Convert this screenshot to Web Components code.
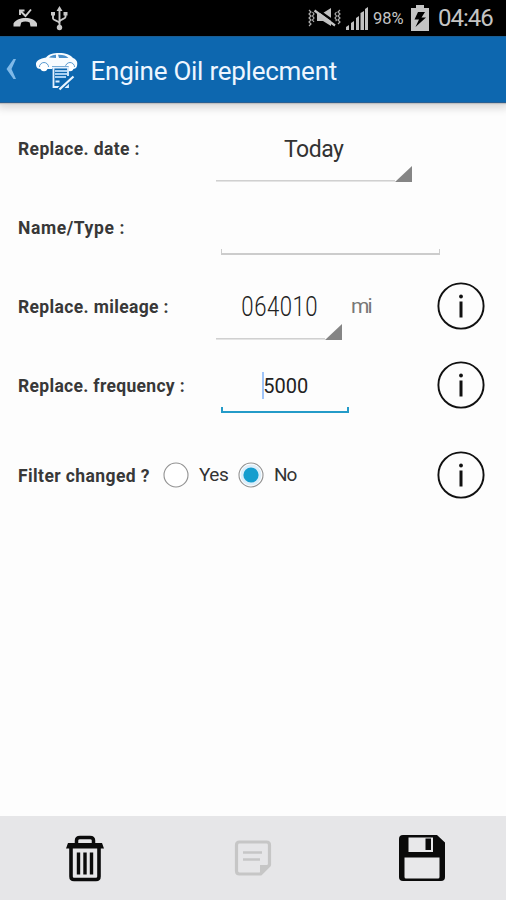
<!DOCTYPE html>
<html lang="en">
<head>
<meta charset="utf-8">
<title>Engine Oil</title>
<style>
html,body{margin:0;height:100%;background:#fdfdfd}
body{font-family:Roboto,"Liberation Sans",sans-serif}
</style>
</head>
<body>
<oil-app></oil-app>
<script>
const define = (name, html, ready) => {
  const t = document.createElement('template');
  t.innerHTML = html;
  customElements.define(name, class extends HTMLElement {
    constructor() { super(); this.attachShadow({mode: 'open'}).append(t.content.cloneNode(true)); }
    connectedCallback() { if (ready) ready(this, this.shadowRoot); }
  });
};

/* Text run whose tracking is adjusted to the width given in "w". */
define('track-text', `<style>:host{display:inline-block;white-space:pre;line-height:1}span{display:inline-block}</style><span><slot></slot></span>`,
  (el, root) => {
    const span = root.querySelector('span'), w = +el.getAttribute('w');
    el.style.width = w + 'px';
    const n = el.textContent.length;
    span.style.letterSpacing = ((w - span.offsetWidth) / (n - 1)) + 'px';
  });

define('status-bar', `<style>
:host{display:flex;height:36px;background:#000;color:#c4c4c4;align-items:center;box-sizing:border-box;position:relative;z-index:1}
svg{display:block;flex:none}.gap{flex:1}
.pct{font-size:16.500px;margin-left:4px;padding-top:2px}.time{font-size:24px;margin:0 12px 0 9px}
</style>
<svg style="margin-left:13px" width="25" height="36" fill="none" stroke="#cfcfcf"><path d="M0.5 26.5v-3c2.5-4 7-5.5 12-5.5s9.500 1.500 11.500 5.500v3h-6.500l-.8-4c-2.500-1.200-6-1.200-8.500 0l-1 4z" fill="#cfcfcf" stroke="none"/><path d="M7 15V10.500h4.500M7.500 11l5 5L18 9.500" stroke-width="1.900"/></svg>
<svg style="margin-left:12px" width="19" height="36" fill="none" stroke="#c8c8c8" stroke-width="1.900"><path d="M9.500 9v18M3 14v4.500c0 2 6.500 2.500 6.500 5M15.500 14v3c0 2-6 2.500-6 5"/><circle cx="9.500" cy="27.500" r="2.700" fill="#c8c8c8" stroke="none"/><path d="M6.500 11l3-5 3 5zM1 12h4v3.500H1zM13.500 12h4v3.500h-4z" fill="#c8c8c8" stroke="none"/></svg>
<span class="gap"></span>
<svg width="33" height="36" fill="none" stroke="#aaa" stroke-width="1.200"><path d="M1 10l2 2-2 2 2 2-2 2 2 2-2 2 2 2-2 2M4.500 12l1.500 2-1.500 2 1.500 2-1.500 2 1.500 2M28.500 12l-1.500 2 1.500 2-1.500 2 1.500 2-1.500 2M32 10l-2 2 2 2-2 2 2 2-2 2 2 2-2 2"/><path d="M9 13h6l8-5v18l-8-5H9z" fill="#c0c0c0" stroke="none"/><path d="M7 8L28 23" stroke="#000" stroke-width="2.500"/><path d="M6.500 10.500L27 25.500" stroke="#c4c4c4" stroke-width="2.200"/></svg>
<svg style="margin-left:4px" width="24" height="36" fill="#c0c0c0"><path d="M1 30v-3l3-2v5zM6 30v-7l3-2v9zM11 30V18l3-2v14zM15.500 30V13l3.500-2v19zM20 30V9l3-2v23z"/></svg>
<track-text class="pct" w="31">98%</track-text>
<svg style="margin-left:7px" width="18" height="36"><path d="M5 5h8v3h5v23H0V8h5z" fill="#c4c4c4"/><path d="M7 12h7l-3.500 5.500H15L4.500 27 8 19.500H3.500z" fill="#000"/></svg>
<track-text class="time" w="56">04:46</track-text>`);

define('title-bar', `<style>
:host{display:flex;height:67px;background:#0d67af;color:#eef6ff;align-items:center;box-sizing:border-box;border-top:1px solid #1a5d92;border-bottom:1px solid #2a5f92;box-shadow:0 1px 1px #c0c0c0,0 3px 8px 2px #d8d8d8;position:relative}
svg{display:block;flex:none}track-text{font-size:26px;margin-left:12.500px;padding-top:2px}
</style>
<svg width="30" height="65"><path d="M13.500 22h2.500l-4.500 10 4.500 10h-2.500L6.500 32z" fill="#7fb9e8"/></svg>
<svg style="margin-left:5px" width="43" height="65"><path d="M1 28c-.5-4.500 4-6.500 10-7.500 3-3.500 7-4.500 13-4.500 7 0 11 1.500 14 5 3.500 1.500 5 4 4 8-.3 2-2 3-4 3H6c-3 0-4.500-1-5-4z" fill="#f8fcff"/><path d="M14 20.500c2-2 4-2.800 7-2.800v3.300zM23 17.700c5-.2 8 .8 10.500 3.300H24z" fill="#4a90cc"/><path d="M4.500 30a4.500 4.500 0 0 1 9 0M30.500 30a4.500 4.500 0 0 1 9 0" fill="none" stroke="#5b9bd0" stroke-width="1"/><circle cx="9" cy="30.500" r="3.700" fill="#fff"/><circle cx="35" cy="30.500" r="3.700" fill="#fff"/>
<path d="M17 29h16.500v14l-6 7H17z" fill="#0d67af"/><path d="M17 30.500h16.500M18.500 30v20h8M33 30v9M33 45v5h-3.500" fill="none" stroke="#e4f1ff" stroke-width="1.800"/><path d="M20 34h12M20 37h12M20 40h11" stroke="#a9d0f2" stroke-width="1.800"/><path d="M20.500 44.500h4" stroke="#e4f1ff" stroke-width="2"/><path d="M39 39L27 50l-2.500 2.500" stroke="#0d67af" stroke-width="5"/><path d="M38.500 39.500L26.500 50.500l-2 2" stroke="#eaf5ff" stroke-width="2.200"/></svg>
<track-text w="247">Engine Oil replecment</track-text>`);

define('info-button', `<style>:host{display:block;width:48px;height:48px;margin-bottom:2px}svg{display:block}</style>
<svg width="48" height="48"><circle cx="24" cy="24" r="22.600" fill="none" stroke="#111" stroke-width="1.900"/><circle cx="24" cy="14.500" r="1.900" fill="#111"/><path d="M24 19.500V35.500" stroke="#111" stroke-width="3"/></svg>`);

define('spinner-field', `<style>
:host{display:grid;height:100%;grid-template:1fr 16px 6px/1fr;box-sizing:border-box;color:#333}
.v{grid-area:1/1/4/2;place-self:center;padding-top:1px}
.l{grid-area:2/1;display:flex;align-items:flex-end}
.l i{flex:1;height:1px;background:#d0d0d0;border-bottom:1px solid #e4e4e4}
svg{display:block}
</style><div class="v"><slot></slot></div><div class="l"><i></i><svg width="17" height="16"><path d="M17 0v16H0z" fill="#858585"/></svg></div>`);

define('edit-field', `<style>
:host{display:grid;height:100%;grid-template:1fr 6px 12px/1fr;color:#222}
.v{grid-area:1/1/4/2;place-self:center}
.l{grid-area:2/1;border:solid var(--line,#ccc);border-width:0 var(--side,1px) var(--base,2px)}
</style><div class="v"><slot></slot></div><div class="l"></div>`);

define('form-row', `<style>
:host{display:grid;grid-template-columns:198px 1fr 48px;height:79px;padding:0 21px 0 18px;align-items:center}
.label{font-weight:700;font-size:17.500px;color:#383838;display:flex;padding-top:2px}
.field{height:100%;display:flex;align-items:center}
</style><div class="label"><slot name="label"></slot></div><div class="field"><slot></slot></div><slot name="info"></slot>`);

define('radio-option', `<style>:host{display:flex;align-items:center;font-size:19px;color:#333;margin-top:-2px}svg{display:block;margin-right:9px}.dot{display:none}:host([checked]) .dot{display:block}</style>
<svg width="28" height="28"><circle cx="14" cy="14" r="12" fill="#fff" stroke="#929292" stroke-width="1.100"/><g class="dot"><circle cx="14" cy="14" r="10.500" fill="#dceefa"/><circle cx="14" cy="14" r="7.600" fill="#159dce"/></g></svg><slot></slot>`);

define('action-bar', `<style>
:host{display:grid;grid-template-columns:repeat(3,1fr);height:84px;background:#e6e6e8;place-items:center}
svg{display:block}
</style>
<svg style="margin-left:2px" width="48" height="48" fill="none" stroke="#0b0b0b"><path d="M15.500 9V6.500c0-2 1.500-3 3.500-3h10c2 0 3.500 1 3.500 3V9" stroke-width="3.500"/><path d="M7 9h34l2 5.500H5z" fill="#0b0b0b" stroke="none"/><path d="M10 14v28.500q0 3 3 3h22q3 0 3-3V14" stroke-width="3.600"/><path d="M17.500 18.500v22M24 18.500v22M30.500 18.500v22" stroke-width="3.400"/></svg>
<svg width="40" height="40" fill="none" stroke="#c6c6c6"><path d="M6.500 4h27q3 0 3 3v20l-9 9h-21q-3 0-3-3V7q0-3 3-3z" stroke-width="3.200" stroke-linejoin="round"/><path d="M27 37V27h10z" fill="#c6c6c6" stroke="none"/><path d="M10 14.500h19M10 21.500h17" stroke-width="2.400"/></svg>
<svg width="46" height="46"><path d="M4 0h34l8 7.500V42q0 4-4 4H4q-4 0-4-4V4q0-4 4-4z" fill="#0a0a0a"/><path d="M9.500 2.500H34V17H9.500z" fill="#e8e8ea"/><path d="M26.500 3.500H32V15h-5.500z" fill="#0a0a0a"/><path d="M5.500 22.500h35V42q0 1.500-1.500 1.500H7Q5.500 43.500 5.500 42z" fill="#e8e8ea"/></svg>`);

define('oil-app', `<style>
:host{display:flex;flex-direction:column;height:900px;width:506px;background:#fdfdfd;overflow:hidden}
main{flex:1;padding-top:6px;display:flex;flex-direction:column}
form-row{flex:none}
.sp1{width:196px}.sp2{width:126px}
.ed{margin-left:5px}
.digits{font-size:27px;font-weight:300;transform:scaleX(.82);margin:0 -8px;color:#222}
.num{display:flex;align-items:center;font-size:20px}
.num i{width:2.500px;height:27px;background:#9fc4f8;margin-right:-1px}
.choice{grid-template-columns:144px 1fr 48px;margin-top:11px}
</style>
<status-bar></status-bar>
<title-bar></title-bar>
<main>
<form-row><track-text slot="label" w="121">Replace. date :</track-text><spinner-field class="sp1"><track-text w="60" style="font-size:23px">Today</track-text></spinner-field></form-row>
<form-row><track-text slot="label" w="106">Name/Type :</track-text><edit-field class="ed" style="width:219px"></edit-field></form-row>
<form-row><track-text slot="label" w="150">Replace. mileage :</track-text><spinner-field class="sp2"><track-text class="digits" w="93">064010</track-text></spinner-field><track-text w="22" style="font-size:21px;color:#777;margin-left:9px">mi</track-text><info-button slot="info"></info-button></form-row>
<form-row><track-text slot="label" w="167">Replace. frequency :</track-text><edit-field class="ed" style="width:128px;--line:#249bc8;--side:2px"><div class="num"><i></i><track-text w="45">5000</track-text></div></edit-field><info-button slot="info"></info-button></form-row>
<form-row class="choice"><track-text slot="label" w="131">Filter changed ?</track-text><radio-option><track-text w="30">Yes</track-text></radio-option><radio-option checked style="margin-left:8px"><track-text w="23">No</track-text></radio-option><info-button slot="info"></info-button></form-row>
</main>
<action-bar></action-bar>`);
</script>
</body>
</html>
